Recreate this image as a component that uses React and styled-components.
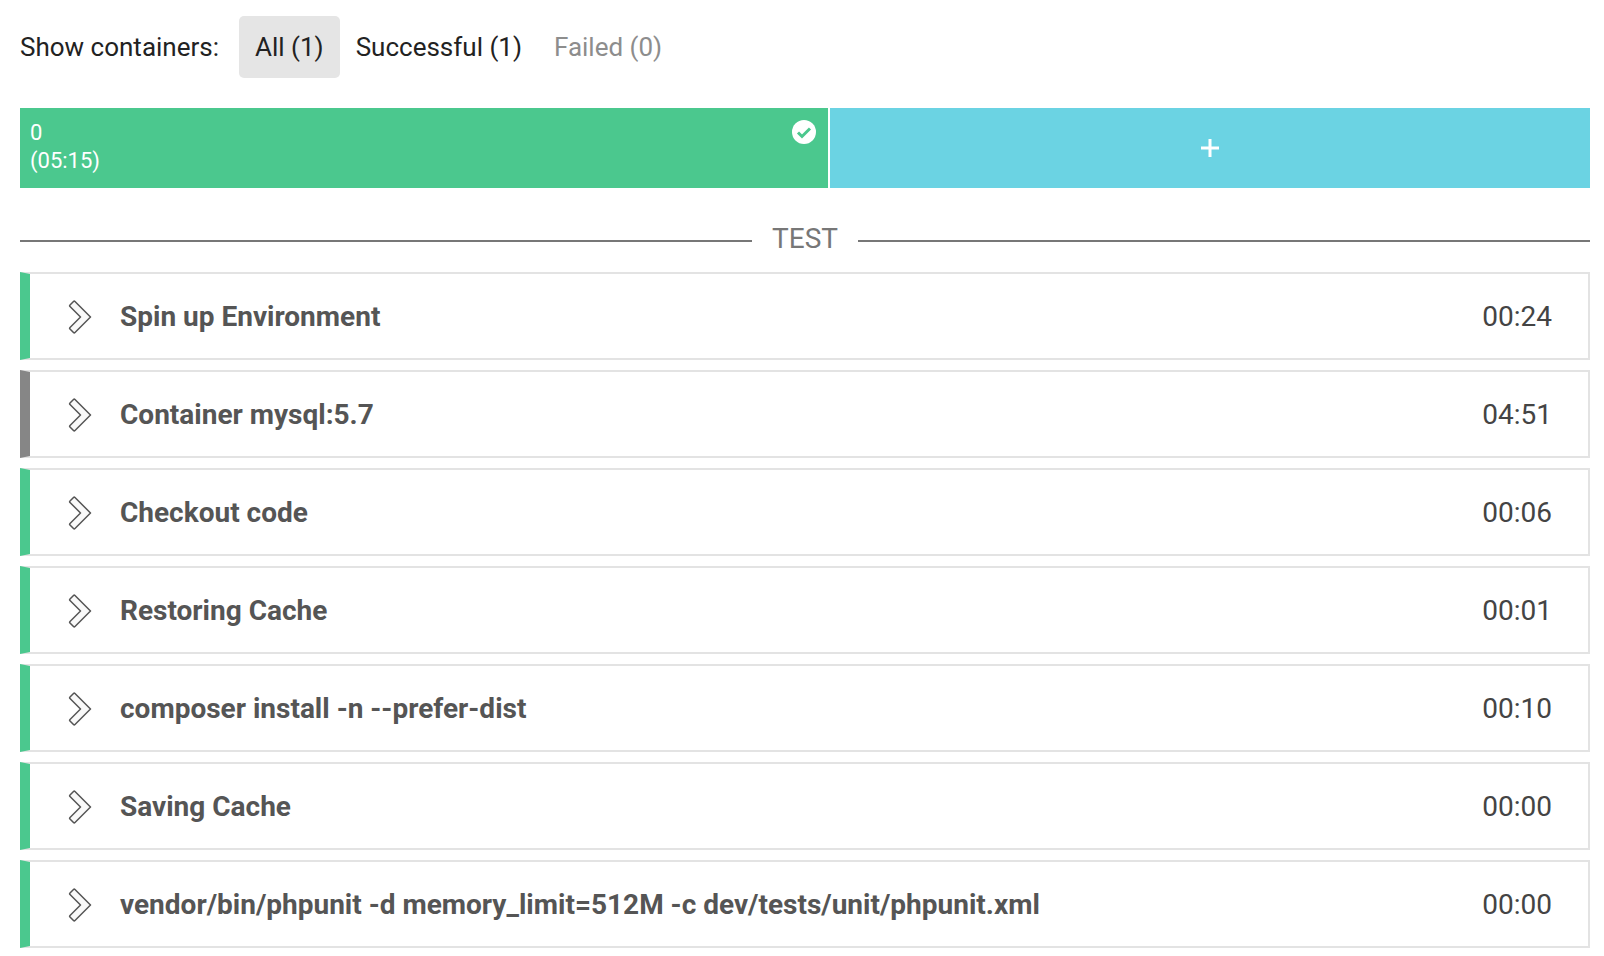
import styled, { createGlobalStyle } from "styled-components";

const steps = [
  { name: "Spin up Environment", time: "00:24" },
  { name: "Container mysql:5.7", time: "04:51", service: true },
  { name: "Checkout code", time: "00:06" },
  { name: "Restoring Cache", time: "00:01" },
  { name: "composer install -n --prefer-dist", time: "00:10" },
  { name: "Saving Cache", time: "00:00" },
  { name: "vendor/bin/phpunit -d memory_limit=512M -c dev/tests/unit/phpunit.xml", time: "00:00" },
];

function App() {
  return (
    <>
      <GlobalStyle />
      <Page>
        <Filters>
          <FilterLabel>Show containers:</FilterLabel>
          <FilterTab $active>All (1)</FilterTab>
          <FilterTab>Successful (1)</FilterTab>
          <FilterTab $disabled>Failed (0)</FilterTab>
        </Filters>
        <Containers>
          <ContainerBox>
            <span>0</span>
            <span>(05:15)</span>
            <CheckBadge viewBox="0 0 24 24">
              <circle cx="12" cy="12" r="12" fill="#fff" />
              <path d="M6 12.5l4 4 8-8" fill="none" stroke="#4bc88e" strokeWidth="3" />
            </CheckBadge>
          </ContainerBox>
          <AddBox>
            <svg width="20" height="20" viewBox="0 0 20 20">
              <path d="M10 1v18M1 10h18" stroke="#fff" strokeWidth="3" />
            </svg>
          </AddBox>
        </Containers>
        <Divider>
          <DividerLabel>TEST</DividerLabel>
        </Divider>
        <StepList>
          {steps.map((step) => (
            <Step key={step.name} $service={step.service}>
              <Chevron viewBox="0 0 24 34">
                <path
                  d="M7 1.5L22.5 17 7 32.5c-.5.5-1 .5-1.500 0L2 29c-.500-.500-.500-1 0-1.500L12.500 17 2 6.500c-.500-.500-.500-1 0-1.500l3.500-3.500c.500-.500 1-.500 1.500 0z"
                  fill="#f9f9f9"
                  stroke="#555"
                  strokeWidth="1.500"
                  strokeLinejoin="round"
                />
              </Chevron>
              <StepName>{step.name}</StepName>
              <StepTime>{step.time}</StepTime>
            </Step>
          ))}
        </StepList>
      </Page>
    </>
  );
}

const GlobalStyle = createGlobalStyle`
  body {
    margin: 0;
    background: #fff;
    font-family: Roboto, "Liberation Sans", sans-serif;
  }
`;

const Page = styled.div`
  padding: 16px 14px 0 20px;
`;

const Filters = styled.div`
  display: flex;
  align-items: center;
  height: 62px;
  font-size: 26px;
  color: #222;
`;

const FilterLabel = styled.span`
  margin-right: 20px;
`;

const FilterTab = styled.span`
  height: 62px;
  line-height: 62px;
  padding: 0 16px;
  border-radius: 5px;
  background: ${(p) => (p.$active ? "#e5e5e5" : "transparent")};
  color: ${(p) => (p.$disabled ? "#8d8d8d" : "#222")};
`;

const Containers = styled.div`
  display: flex;
  gap: 2px;
  height: 80px;
  margin-top: 30px;
`;

const ContainerBox = styled.div`
  position: relative;
  flex: 0 0 808px;
  display: flex;
  flex-direction: column;
  justify-content: center;
  padding: 0 0 2px 10px;
  box-sizing: border-box;
  background: #4bc88e;
  color: #fff;
  font-size: 22px;
  line-height: 28px;
`;

const CheckBadge = styled.svg`
  position: absolute;
  top: 12px;
  right: 12px;
  width: 24px;
  height: 24px;
`;

const AddBox = styled.div`
  flex: 1;
  display: flex;
  align-items: center;
  justify-content: center;
  background: #6bd3e3;
`;

const Divider = styled.div`
  display: flex;
  align-items: center;
  justify-content: center;
  height: 2px;
  margin: 52px 0 30px;
  background: #777;
`;

const DividerLabel = styled.span`
  padding: 0 0 4px;
  width: 106px;
  height: 32px;
  text-align: center;
  background: #fff;
  color: #777;
  font-size: 28px;
  line-height: 32px;
`;

const StepList = styled.div`
  display: flex;
  flex-direction: column;
  gap: 10px;
`;

const Step = styled.div`
  display: flex;
  align-items: center;
  height: 88px;
  box-sizing: border-box;
  padding-right: 36px;
  border: 2px solid #e3e3e3;
  border-left: 10px solid ${(p) => (p.$service ? "#868686" : "#4bc88e")};
`;

const Chevron = styled.svg`
  flex: none;
  width: 24px;
  height: 34px;
  margin: 1px 0 0 38px;
`;

const StepName = styled.span`
  flex: 1;
  margin-left: 28px;
  color: #555;
  font-size: 28px;
  font-weight: 700;
`;

const StepTime = styled.span`
  color: #444;
  font-size: 28px;
`;

export default App;
